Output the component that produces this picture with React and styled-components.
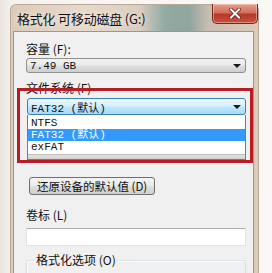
import React from 'react';
import styled, { createGlobalStyle } from 'styled-components';

const GlobalStyle = createGlobalStyle`
  html, body {
    margin: 0;
    padding: 0;
    background: #f3efea;
  }
  #root {
    width: 272px;
    height: 273px;
    overflow: hidden;
  }
`;

const Page = styled.div`
  position: relative;
  width: 272px;
  height: 273px;
  padding: 4px 13px 0 10px;
  box-sizing: border-box;
  background: linear-gradient(90deg, #e9e4de 0%, #f6f3ef 5%, #faf8f6 100%);
  font-family: 'Noto Sans CJK SC', 'Liberation Sans', sans-serif;
`;

const Window = styled.div`
  display: flex;
  flex-direction: column;
  height: 100%;
  padding: 0 4px 0 2px;
  border-radius: 6px 6px 0 0;
  border: 1px solid #b8a898;
  border-bottom: none;
  box-sizing: border-box;
  background: linear-gradient(
    90deg,
    #dccbb8 0%,
    #e6d9cb 30%,
    #d9cdbf 52%,
    #93aba4 62%,
    #8fa59e 72%,
    #c9bdb0 80%,
    #dccbb8 100%
  );
`;

const TitleBar = styled.div`
  position: relative;
  display: flex;
  align-items: center;
  height: 26px;
  padding-left: 4px;
  flex-shrink: 0;
`;

const Title = styled.span`
  font-size: 13px;
  color: #111;
  letter-spacing: -0.2px;
  text-shadow: 0 0 6px rgba(255, 255, 255, 0.9);
`;

const CloseButton = styled.div`
  position: absolute;
  top: -1px;
  right: -4px;
  width: 44px;
  height: 19px;
  display: flex;
  align-items: center;
  justify-content: center;
  border: 1px solid #6e2a22;
  border-top: none;
  border-radius: 0 0 5px 5px;
  background: linear-gradient(180deg, #e5a08f 0%, #d3705c 45%, #b7382a 55%, #c9523e 100%);
  box-shadow: inset 0 0 0 1px rgba(255, 220, 210, 0.45);
`;

const Client = styled.div`
  position: relative;
  flex: 1;
  display: flex;
  flex-direction: column;
  padding: 9px 7px 0 12px;
  background: #f0f0f0;
  border: 1px solid #a39486;
  border-bottom: none;
`;

const Label = styled.div`
  font-size: 12px;
  line-height: 16px;
  color: #111;
  margin-top: ${(p) => p.$top || 0}px;
  height: 16px;
`;

const Combo = styled.div`
  display: flex;
  align-items: center;
  justify-content: space-between;
  height: ${(p) => (p.$open ? 15 : 13)}px;
  margin-top: ${(p) => p.$top || 0}px;
  margin-left: ${(p) => (p.$open ? 1 : 0)}px;
  padding: 0 4px 0 3px;
  border: 1px solid ${(p) => (p.$open ? '#3c7fb1' : '#8e8f8f')};
  border-radius: 3px;
  background: ${(p) =>
    p.$open
      ? 'linear-gradient(180deg, #eaf6fd 0%, #d9f0fc 45%, #bee6fd 55%, #a7d9f5 100%)'
      : 'linear-gradient(180deg, #f2f2f2 0%, #ebebeb 45%, #dddddd 55%, #cfcfcf 100%)'};
`;

const ComboText = styled.span`
  font-family: 'Liberation Mono', 'Noto Sans CJK SC', monospace;
  font-size: 11px;
  color: #111;
  white-space: pre;
`;

const Arrow = styled.span`
  width: 0;
  height: 0;
  border-left: 4px solid transparent;
  border-right: 4px solid transparent;
  border-top: 4px solid #1a1a1a;
`;

const List = styled.div`
  display: flex;
  flex-direction: column;
  margin-left: 1px;
  padding-top: 2px;
  background: #fff;
  border: 1px solid #7a7a7a;
  border-top: none;
`;

const Item = styled.div`
  height: 12px;
  line-height: 12px;
  padding: 0 3px;
  font-family: 'Liberation Mono', 'Noto Sans CJK SC', monospace;
  font-size: 11px;
  color: ${(p) => (p.$selected ? '#fff' : '#111')};
  background: ${(p) => (p.$selected ? '#3399ff' : 'transparent')};
`;

const ListFoot = styled.div`
  height: 4px;
  margin-top: 1px;
  background: linear-gradient(180deg, #e4e4e4, #cfcfcf);
  border-top: 1px solid #bdbdbd;
`;

const Button = styled.div`
  align-self: flex-start;
  display: flex;
  align-items: center;
  height: 16px;
  margin: 17px 0 0 3px;
  padding: 0 7px;
  border: 1px solid #707070;
  border-radius: 3px;
  background: linear-gradient(180deg, #f2f2f2 0%, #ebebeb 45%, #dddddd 55%, #cfcfcf 100%);
  font-size: 11.5px;
  color: #111;
`;

const TextBox = styled.div`
  height: 16px;
  margin-top: 5px;
  background: #fff;
  border: 1px solid #e2e3ea;
  border-top-color: #abadb3;
`;

const Group = styled.div`
  position: relative;
  margin-top: 14px;
  height: 30px;
  border: 1px solid #d5dfe5;
  border-radius: 3px;
  box-shadow: inset 1px 1px 0 #fff;
`;

const GroupTitle = styled.span`
  position: absolute;
  top: -9px;
  left: 7px;
  padding: 0 2px;
  background: #f0f0f0;
  font-size: 12px;
  line-height: 16px;
  color: #111;
`;

const Highlight = styled.div`
  position: absolute;
  left: 3px;
  top: 56px;
  width: 236px;
  height: 75px;
  border: 3px solid #b81d26;
  box-sizing: border-box;
  pointer-events: none;
`;

const App = () => (
  <>
    <GlobalStyle />
    <Page>
      <Window>
        <TitleBar>
          <Title>格式化 可移动磁盘 (G:)</Title>
          <CloseButton>
            <svg width="12" height="11" viewBox="0 0 12 11">
              <path
                d="M2 1.5 L10 9.5 M10 1.5 L2 9.5"
                stroke="#5a1e18"
                strokeWidth="3.6"
                strokeLinecap="square"
              />
              <path
                d="M2 1.5 L10 9.5 M10 1.5 L2 9.5"
                stroke="#fff"
                strokeWidth="2"
                strokeLinecap="square"
              />
            </svg>
          </CloseButton>
        </TitleBar>
        <Client>
          <Label>容量 (F):</Label>
          <Combo $top={1}>
            <ComboText>7.49 GB</ComboText>
            <Arrow />
          </Combo>
          <Label $top={7}>文件系统 (F)</Label>
          <Combo $open $top={2}>
            <ComboText>FAT32 (默认)</ComboText>
            <Arrow />
          </Combo>
          <List>
            <Item>NTFS</Item>
            <Item $selected>FAT32 (默认)</Item>
            <Item>exFAT</Item>
            <ListFoot />
          </List>
          <Button>还原设备的默认值 (D)</Button>
          <Label $top={12}>卷标 (L)</Label>
          <TextBox />
          <Group>
            <GroupTitle>格式化选项 (O)</GroupTitle>
          </Group>
          <Highlight />
        </Client>
      </Window>
    </Page>
  </>
);

export default App;
